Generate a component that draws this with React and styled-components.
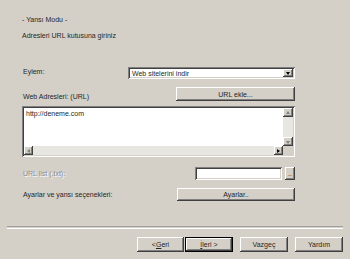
import styled, { createGlobalStyle } from "styled-components"

const GlobalStyle = createGlobalStyle`
    body {
        margin: 0;
        background: #d4d0c8;
        font-family: "Liberation Sans", Arial, sans-serif;
        font-size: 7px;
        color: #262626;
    }
`;

const raised = `
    background: #d4d0c8;
    box-shadow: inset -1px -1px #404040, inset 1px 1px #ffffff,
        inset -2px -2px #808080, inset 2px 2px #d4d0c8;
`;

const sunken = `
    box-shadow: inset 1px 1px #808080, inset -1px -1px #ffffff,
        inset 2px 2px #404040, inset -2px -2px #d4d0c8;
`;

const Page = styled.div`
    width: 350px;
    height: 259px;
    box-sizing: border-box;
    padding-top: 15px;
    display: flex;
    flex-direction: column;
`;

const Header = styled.div`
    padding-left: 22px;
    line-height: 9px;
`;

const Subtitle = styled.div`
    margin-top: 7px;
`;

const Form = styled.div`
    margin-top: 27px;
    padding: 0 55px 0 22px;
    display: flex;
    flex-direction: column;
`;

const Row = styled.div`
    display: flex;
    align-items: ${props => props.align || "center"};
    height: ${props => props.h}px;
    margin-top: ${props => props.mt || 0}px;
`;

const Label = styled.div`
    flex: 1;
    padding-left: 1px;
    line-height: 9px;
    color: ${props => props.disabled ? "#8a8a8a" : "#262626"};
    text-shadow: ${props => props.disabled ? "1px 1px #ffffff" : "none"};
`;

const Combo = styled.div`
    width: 167px;
    height: 100%;
    box-sizing: border-box;
    background: #fff;
    ${sunken}
    display: flex;
    align-items: center;
    padding: 2px;
`;

const ComboText = styled.div`
    flex: 1;
    padding-left: 2px;
`;

const ArrowBtn = styled.div`
    ${raised}
    width: ${props => props.w || 10}px;
    height: ${props => props.h ? props.h + "px" : "100%"};
    box-sizing: border-box;
    display: flex;
    align-items: center;
    justify-content: center;
`;

const Tri = styled.div`
    width: 0;
    height: 0;
    border: 2px solid transparent;
    ${props => props.dir === "down" && `border-top: 3px solid ${props.c}; border-bottom: 0; margin-top: 1px;`}
    ${props => props.dir === "up" && `border-bottom: 3px solid ${props.c}; border-top: 0;`}
    ${props => props.dir === "left" && `border-right: 3px solid ${props.c}; border-left: 0;`}
    ${props => props.dir === "right" && `border-left: 3px solid ${props.c}; border-right: 0;`}
`;

const Button = styled.div`
    ${raised}
    width: ${props => props.w}px;
    height: 100%;
    box-sizing: border-box;
    display: flex;
    align-items: center;
    justify-content: center;
`;

const TextArea = styled.div`
    margin-top: 5px;
    height: 51px;
    box-sizing: border-box;
    background: #fff;
    ${sunken}
    padding: 2px;
    display: grid;
    grid-template-columns: 1fr 10px;
    grid-template-rows: 1fr 9px;
`;

const AreaText = styled.div`
    padding: 1px 2px;
    line-height: 9px;
`;

const VScroll = styled.div`
    background: #e8e6e1;
    display: flex;
    flex-direction: column;
    justify-content: space-between;
`;

const HScroll = styled.div`
    background: #e8e6e1;
    display: flex;
    justify-content: space-between;
`;

const Corner = styled.div`
    background: #d4d0c8;
`;

const Input = styled.div`
    width: 87px;
    height: 100%;
    box-sizing: border-box;
    background: #fff;
    ${sunken}
    margin-right: 3px;
`;

const Spacer = styled.div`
    flex: 1;
`;

const Separator = styled.div`
    margin: 0 7px;
    height: 1px;
    border-top: 1px solid #a0a0a0;
    border-bottom: 1px solid #ffffff;
`;

const Footer = styled.div`
    display: flex;
    justify-content: flex-end;
    height: 15px;
    margin-top: 8px;
    padding: 0 7px 7px 0;
`;

const NavButton = styled(Button)`
    margin-left: ${props => props.ml || 0}px;
    ${props => props.primary && `
        box-shadow: inset 0 0 0 1px #000, inset -2px -2px #404040,
            inset 2px 2px #ffffff, inset -3px -3px #808080;
    `}
`;

const App = () => {
  return (
    <>
      <GlobalStyle />
      <Page>
        <Header>
          <div>- Yansı Modu -</div>
          <Subtitle>Adresleri URL kutusuna giriniz</Subtitle>
        </Header>
        <Form>
          <Row h={12} align="flex-start">
            <Label>Eylem:</Label>
            <Combo>
              <ComboText>Web sitelerini indir</ComboText>
              <ArrowBtn>
                <Tri dir="down" c="#000" />
              </ArrowBtn>
            </Combo>
          </Row>
          <Row h={14} mt={8} align="flex-end">
            <Label>Web Adresleri: (URL)</Label>
            <Button w={119}>URL ekle...</Button>
          </Row>
          <TextArea>
            <AreaText>http://deneme.com</AreaText>
            <VScroll>
              <ArrowBtn h={9}><Tri dir="up" c="#808080" /></ArrowBtn>
              <ArrowBtn h={9}><Tri dir="down" c="#808080" /></ArrowBtn>
            </VScroll>
            <HScroll>
              <ArrowBtn w={9}><Tri dir="left" c="#808080" /></ArrowBtn>
              <ArrowBtn w={9}><Tri dir="right" c="#000" /></ArrowBtn>
            </HScroll>
            <Corner />
          </TextArea>
          <Row h={13} mt={10}>
            <Label disabled>URL list (.txt):</Label>
            <Input />
            <Button w={10}>..</Button>
          </Row>
          <Row h={13} mt={8}>
            <Label>Ayarlar ve yansı seçenekleri:</Label>
            <Button w={118}>Ayarlar..</Button>
          </Row>
        </Form>
        <Spacer />
        <Separator />
        <Footer>
          <NavButton w={47}>&lt; <u>G</u>eri</NavButton>
          <NavButton w={48} ml={1} primary><u>İ</u>leri &gt;</NavButton>
          <NavButton w={48} ml={7}>Vazgeç</NavButton>
          <NavButton w={48} ml={7}>Yardım</NavButton>
        </Footer>
      </Page>
    </>
  )
}

export default App
